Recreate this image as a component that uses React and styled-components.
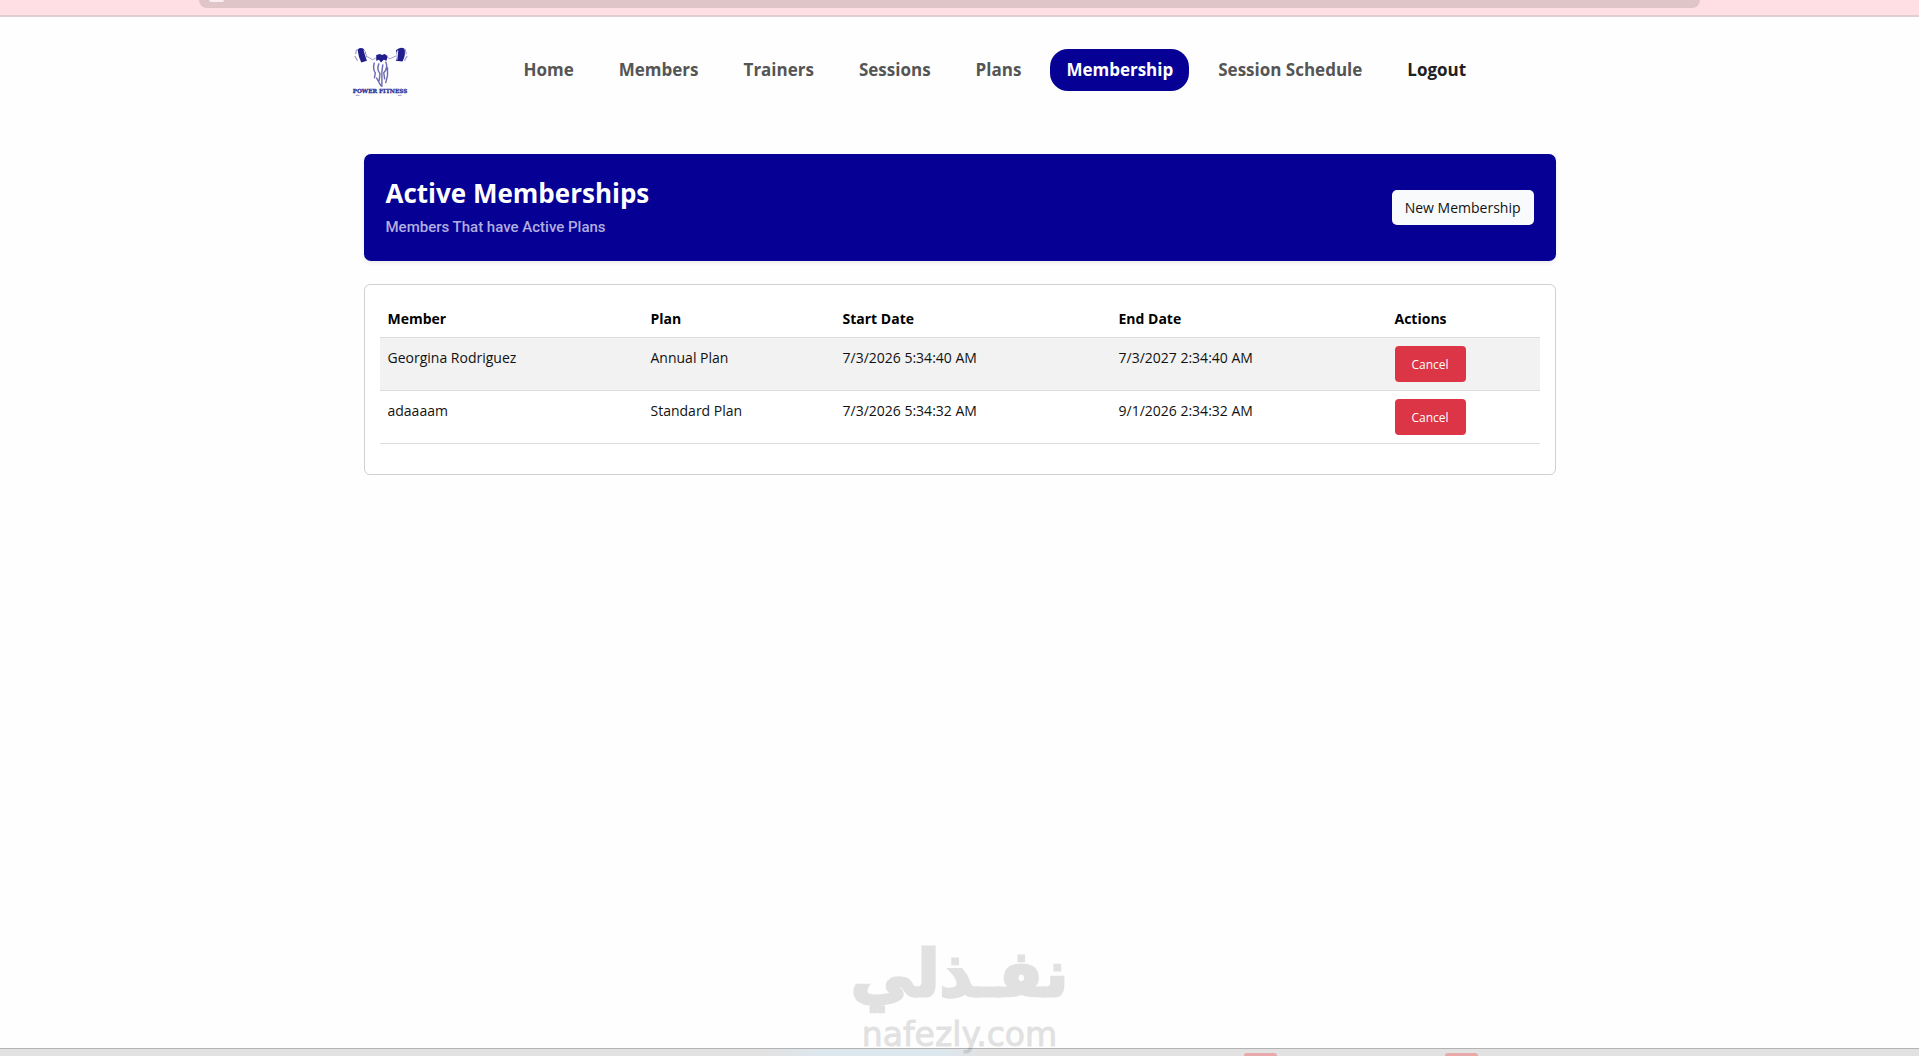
import React, { Component } from 'react';
import styled, { createGlobalStyle } from 'styled-components';

const GlobalStyle = createGlobalStyle`
* {
  box-sizing: border-box;
}
body {
  margin: 0;
  background-color: #fefefe;
  color: #111;
  font-family: "Open Sans", "Noto Sans", sans-serif;
  font-size: 14px;
  line-height: 24px;
}
`;

const Page = styled.div`
display: flex;
flex-direction: column;
min-height: 100vh;
position: relative;
overflow: hidden;
`;

const TopStrip = styled.div`
display: flex;
justify-content: center;
align-items: flex-start;
height: 17px;
padding-right: 20px;
background-color: #ffdfe4;
border-bottom: 2px solid #e0cfd1;
`;

const AddressBar = styled.div`
width: 79%;
height: 8px;
padding-left: 10px;
border-radius: 0 0 18px 18px;
background-color: #dfc4c8;
`;

const AddressIcon = styled.div`
width: 15px;
height: 2px;
border-radius: 0 0 8px 8px;
background-color: #fbeef0;
`;

const Header = styled.header`
display: flex;
align-items: center;
width: 100%;
max-width: 1240px;
height: 105px;
margin: 0 auto;
padding-left: 8px;
`;

const Brand = styled.a`
display: flex;
justify-content: center;
width: 64px;
text-decoration: none;
`;

const Nav = styled.nav`
display: flex;
align-items: center;
gap: 13px;
margin-left: 96px;
`;

const NavLink = styled.a`
padding: 8px 16px;
border-radius: 18px;
font-size: 17px;
font-weight: 700;
line-height: 26px;
white-space: nowrap;
text-decoration: none;
color: ${props => (props.$active ? 'white' : props.$dark ? '#212121' : '#555')};
background-color: ${props => (props.$active ? '#060095' : 'transparent')};
`;

const Main = styled.main`
flex: 1;
width: 100%;
max-width: 1192px;
margin: 32px auto 0;
`;

const Banner = styled.section`
display: flex;
align-items: center;
justify-content: space-between;
padding: 22px;
border-radius: 7px;
background-color: #060095;
box-shadow: 0 2px 4px rgba(0, 0, 0, 0.08);
`;

const Title = styled.h1`
margin: 0;
font-size: 26px;
font-weight: 700;
line-height: 34px;
color: white;
`;

const Subtitle = styled.p`
margin: 5px 0 0;
font-family: Roboto, sans-serif;
font-size: 15px;
font-weight: 500;
color: #b1aee0;
`;

const NewButton = styled.button`
height: 35px;
padding: 0 13px;
border: 0;
border-radius: 5px;
background-color: #f8fafc;
font-family: inherit;
font-size: 14px;
color: #111;
`;

const Card = styled.section`
margin-top: 23px;
padding: 16px 15px;
border: 1px solid #d0d0d0;
border-radius: 6px;
background-color: white;
`;

const Table = styled.table`
width: 100%;
margin-bottom: 14px;
border-collapse: separate;
border-spacing: 0;
table-layout: fixed;
`;

const Column = styled.col`
width: ${props => props.$width};
`;

const HeadCell = styled.th`
padding: 8px;
border-bottom: 1px solid #dcdfe1;
line-height: 20px;
text-align: left;
color: black;
`;

const Row = styled.tr`
background-color: ${props => (props.$striped ? '#f2f2f2' : 'white')};
`;

const Cell = styled.td`
padding: 8px;
border-bottom: 1px solid #dcdfe1;
vertical-align: top;
`;

const CancelButton = styled.button`
display: block;
height: 36px;
padding: 0 17px;
border: 0;
border-radius: 4px;
background-color: #dc3545;
font-family: inherit;
font-size: 12px;
color: white;
`;

const Watermark = styled.div`
position: absolute;
left: 0;
right: 0;
bottom: 0;
height: 122px;
text-align: center;
font-family: "DejaVu Sans", sans-serif;
color: black;
opacity: 0.11;
pointer-events: none;
`;

const WatermarkArabic = styled.div`
font-size: 64px;
font-weight: 700;
line-height: 80px;
-webkit-text-stroke: 3px black;
`;

const WatermarkLatin = styled.div`
font-size: 33px;
line-height: 42px;
-webkit-text-stroke: 1px black;
`;

const BottomStrip = styled.div`
display: flex;
justify-content: flex-end;
align-items: flex-end;
gap: 168px;
height: 8px;
padding-right: 441px;
border-top: 1px solid #b3b3b3;
background: linear-gradient(to right, #e2e2e2 40%, #dce8ee 43%, #dce8ee 49%, #e2e2e2 51%);
`;

const TaskBadge = styled.div`
width: 33px;
height: 3px;
border-radius: 6px 6px 0 0;
background-color: #e8a9ab;
`;

const links = ['Home', 'Members', 'Trainers', 'Sessions', 'Plans', 'Membership', 'Session Schedule', 'Logout'];

const memberships = [
    { id: 1, member: 'Georgina Rodriguez', plan: 'Annual Plan', start: '7/3/2026 5:34:40 AM', end: '7/3/2027 2:34:40 AM' },
    { id: 2, member: 'adaaaam', plan: 'Standard Plan', start: '7/3/2026 5:34:32 AM', end: '9/1/2026 2:34:32 AM' }
];

const Logo = () => (
    <svg width="60" height="56" viewBox="0 0 64 56" role="img" aria-label="Power Fitness">
        <g fill="none" stroke="#3a3797">
            <path d="M14 13 Q19 13 24 17 Q27 15 31 14 M54 13 Q48 12 43 16 Q39 14 36 14" strokeWidth="1" opacity="0.5" />
            <path d="M5 13 L8 18 M61 13 L58 18 M7 6 L6 11 M59 6 L60 11" strokeWidth="1.2" opacity="0.5" />
            <path d="M26 20 Q24 27 27 31 L26 37 M31 21 Q28 27 32 32 L31 40 M38 19 Q41 26 36 31 L37 38 M35 22 L34 30 L34 46 M40 25 L40 34 L38 42 M28 36 L33 45" strokeWidth="1.5" opacity="0.75" />
        </g>
        <g fill="#211d8c">
            <path d="M8 6 Q12 3 15 6 Q18 10 18 18 L12 20 Q9 14 8 6Z" />
            <path d="M49 7 Q53 3 58 5 Q60 11 56 19 L49 18 Q51 13 49 7Z" />
            <path d="M28 12 L32 11 L34 12 L37 11 L40 13 L39 18 L36 17 L33 20 L31 17 L28 18Z" />
        </g>
        <path d="M15 7 L18 17 M51 7 L50 17" stroke="white" strokeWidth="1" />
        <text x="32" y="52" textAnchor="middle" fontFamily="DejaVu Serif, serif" fontSize="6" fontWeight="700" fill="#302d91" stroke="#302d91" strokeWidth="0.3">POWER FITNESS</text>
        <path d="M6 55 H10 M51 55 H55" stroke="#9795c4" strokeWidth="1" />
    </svg>
);

class App extends Component {

    render() {
        return (
            <Page>
                <GlobalStyle />
                <TopStrip>
                    <AddressBar>
                        <AddressIcon />
                    </AddressBar>
                </TopStrip>
                <Header>
                    <Brand href="#home">
                        <Logo />
                    </Brand>
                    <Nav>
                        {links.map(link => (
                            <NavLink
                                key={link}
                                href={'#' + link.toLowerCase().replace(' ', '-')}
                                $active={link === 'Membership'}
                                $dark={link === 'Logout'}
                            >
                                {link}
                            </NavLink>
                        ))}
                    </Nav>
                </Header>
                <Main>
                    <Banner>
                        <div>
                            <Title>Active Memberships</Title>
                            <Subtitle>Members That have Active Plans</Subtitle>
                        </div>
                        <NewButton type="button">New Membership</NewButton>
                    </Banner>
                    <Card>
                        <Table>
                            <colgroup>
                                <Column $width="263px" />
                                <Column $width="192px" />
                                <Column $width="276px" />
                                <Column $width="276px" />
                                <Column $width="auto" />
                            </colgroup>
                            <thead>
                                <tr>
                                    <HeadCell scope="col">Member</HeadCell>
                                    <HeadCell scope="col">Plan</HeadCell>
                                    <HeadCell scope="col">Start Date</HeadCell>
                                    <HeadCell scope="col">End Date</HeadCell>
                                    <HeadCell scope="col">Actions</HeadCell>
                                </tr>
                            </thead>
                            <tbody>
                                {memberships.map((item, index) => (
                                    <Row key={item.id} $striped={index % 2 === 0}>
                                        <Cell>{item.member}</Cell>
                                        <Cell>{item.plan}</Cell>
                                        <Cell>{item.start}</Cell>
                                        <Cell>{item.end}</Cell>
                                        <Cell>
                                            <CancelButton type="button">Cancel</CancelButton>
                                        </Cell>
                                    </Row>
                                ))}
                            </tbody>
                        </Table>
                    </Card>
                </Main>
                <BottomStrip>
                    <TaskBadge />
                    <TaskBadge />
                </BottomStrip>
                <Watermark>
                    <WatermarkArabic lang="ar" dir="rtl">نفـذلي</WatermarkArabic>
                    <WatermarkLatin>nafezly.com</WatermarkLatin>
                </Watermark>
            </Page>
        )
    }
};

export default App;
